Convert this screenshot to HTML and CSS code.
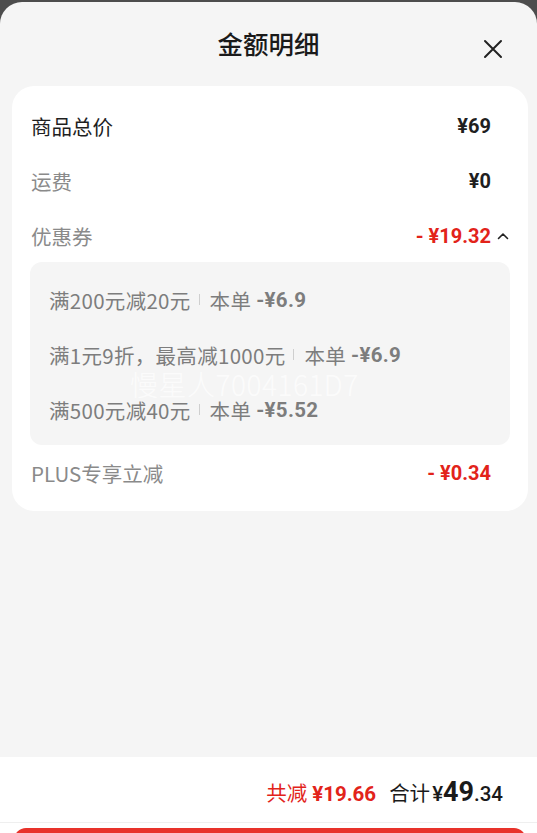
FILE: index.html
```html
<!DOCTYPE html>
<html lang="zh-CN">
<head>
<meta charset="utf-8">
<title>金额明细</title>
<link rel="stylesheet" href="styles.css">
</head>
<body>
<div class="sheet">
  <header class="head">
    <h1 class="title">金额明细</h1>
    <button class="close" aria-label="关闭">
      <svg width="20" height="20" viewBox="0 0 20 20"><path d="M2 2 L18 18 M18 2 L2 18" stroke="#222" stroke-width="2" fill="none" stroke-linecap="round"/></svg>
    </button>
  </header>

  <section class="card">
    <div class="row">
      <span class="label dark">商品总价</span>
      <span class="val">¥69</span>
    </div>
    <div class="row">
      <span class="label">运费</span>
      <span class="val">¥0</span>
    </div>
    <div class="row coupon-row">
      <span class="label">优惠券</span>
      <span class="val red">- ¥19.32</span>
      <span class="caret">
        <svg width="12" height="8" viewBox="0 0 12 8"><path d="M1.5 6.5 L6 2 L10.5 6.5" stroke="#222" stroke-width="1.6" fill="none" stroke-linecap="round" stroke-linejoin="round"/></svg>
      </span>
    </div>
    <div class="coupons">
      <div class="cline"><span>满200元减20元</span><i class="sep"></i><span>本单</span><b>-¥6.9</b></div>
      <div class="cline"><span>满1元9折，最高减1000元</span><i class="sep"></i><span>本单</span><b>-¥6.9</b></div>
      <div class="cline"><span>满500元减40元</span><i class="sep"></i><span>本单</span><b>-¥5.52</b></div>
      <div class="watermark">慢星人7004161D7</div>
    </div>
    <div class="row">
      <span class="label">PLUS专享立减</span>
      <span class="val red">- ¥0.34</span>
    </div>
  </section>

  <div class="spacer"></div>

  <footer class="foot">
    <div class="summary">
      <span class="saved">共减<b>¥19.66</b></span>
      <span class="total">合计<span class="yen">¥</span><b class="big">49</b><span class="dec">.34</span></span>
    </div>
    <div class="btn"></div>
  </footer>
</div>
</body>
</html>
```

FILE: styles.css
```css
* { box-sizing: border-box; }
html, body { margin: 0; padding: 0; }
body {
  background: #4d4d4d;
  height: 833px;
  overflow: hidden;
  font-family: "Noto Sans CJK SC", "Noto Sans", sans-serif;
}
.sheet {
  margin-top: 2px;
  height: 831px;
  background: #f5f5f5;
  border-radius: 22px 22px 0 0;
  display: flex;
  flex-direction: column;
  overflow: hidden;
}
.head {
  position: relative;
  height: 84px;
  display: flex;
  align-items: center;
  justify-content: center;
}
.title {
  margin: 0;
  font-size: 25.5px;
  font-weight: 500;
  color: #1a1a1a;
  line-height: 1;
  padding-bottom: 2px;
}
.close {
  position: absolute;
  right: 34px;
  top: 37px;
  width: 20px;
  height: 20px;
  padding: 0;
  border: 0;
  background: none;
  display: flex;
}
.card {
  margin: 0 9px 0 12px;
  background: #fff;
  border-radius: 22px;
  padding: 12px 18px 11px;
}
.row {
  height: 55px;
  display: flex;
  align-items: center;
  padding: 0 19px 0 1px;
}
.coupon-row { padding-right: 0; }
.label {
  flex: 1;
  font-size: 20.5px;
  color: #8a8a8a;
}
.label.dark { color: #1f1f1f; }
.val {
  font-family: "Roboto", "Noto Sans CJK SC", sans-serif;
  font-size: 20px;
  font-weight: 700;
  color: #1f1f1f;
}
.val.red { color: #e2231a; }
.caret {
  width: 19px;
  display: flex;
  justify-content: flex-end;
  padding-right: 1px;
}
.coupons {
  position: relative;
  background: #f5f5f5;
  border-radius: 12px;
  padding: 10px 19px 8px;
  margin-top: -1px;
}
.cline {
  height: 55px;
  display: flex;
  align-items: center;
  font-size: 20.5px;
  letter-spacing: 0.3px;
  color: #7d7d7d;
  white-space: nowrap;
}
.cline b {
  font-family: "Roboto", "Noto Sans CJK SC", sans-serif;
  font-weight: 700;
  margin-left: 5px;
}
.sep {
  display: inline-block;
  width: 1px;
  height: 11px;
  background: #cfcfcf;
  margin: 0 10px 0 8px;
}
.watermark {
  position: absolute;
  left: 100px;
  top: 108px;
  font-size: 28px;
  font-weight: 300;
  line-height: 1;
  color: rgba(255, 255, 255, 0.7);
  letter-spacing: 0.5px;
  white-space: nowrap;
  pointer-events: none;
}
.spacer { flex: 1; }
.foot {
  height: 76px;
  background: #fff;
  overflow: hidden;
  flex: none;
}
.summary {
  height: 66px;
  border-bottom: 1px solid #efefef;
  display: flex;
  align-items: center;
  justify-content: flex-end;
  padding: 4px 34px 0 0;
  gap: 13px;
}
.saved {
  font-size: 20.5px;
  color: #e2231a;
}
.saved b {
  font-family: "Roboto", sans-serif;
  font-weight: 700;
  margin-left: 5px;
}
.total {
  font-size: 20.5px;
  color: #1a1a1a;
  display: flex;
  align-items: baseline;
}
.yen {
  font-family: "Roboto", sans-serif;
  font-weight: 500;
  margin-left: 2px;
}
.big {
  font-family: "Roboto", sans-serif;
  font-size: 27px;
  font-weight: 700;
}
.dec {
  font-family: "Roboto", sans-serif;
  font-weight: 500;
}
.btn {
  margin: 5px 11px 0 14px;
  height: 44px;
  background: #e8322b;
  border-radius: 12px;
}
```
